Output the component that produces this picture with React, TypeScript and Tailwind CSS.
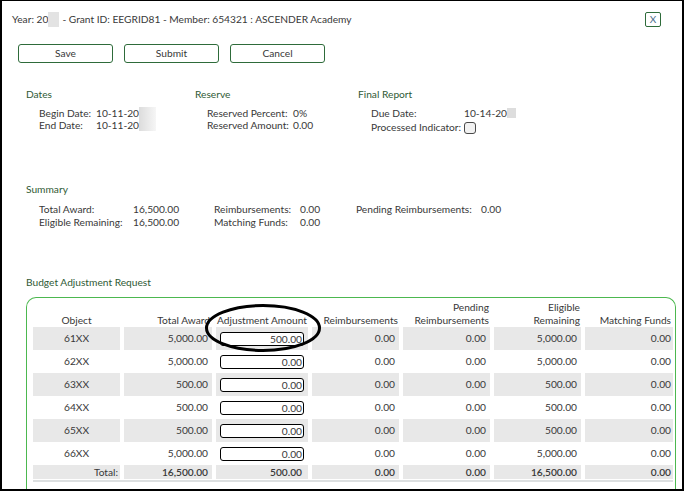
import React from 'react';

const rows = [
  { obj: '61XX', total: '5,000.00', adj: '500.00', reimb: '0.00', pend: '0.00', elig: '5,000.00', match: '0.00' },
  { obj: '62XX', total: '5,000.00', adj: '0.00', reimb: '0.00', pend: '0.00', elig: '5,000.00', match: '0.00' },
  { obj: '63XX', total: '500.00', adj: '0.00', reimb: '0.00', pend: '0.00', elig: '500.00', match: '0.00' },
  { obj: '64XX', total: '500.00', adj: '0.00', reimb: '0.00', pend: '0.00', elig: '500.00', match: '0.00' },
  { obj: '65XX', total: '500.00', adj: '0.00', reimb: '0.00', pend: '0.00', elig: '500.00', match: '0.00' },
  { obj: '66XX', total: '5,000.00', adj: '0.00', reimb: '0.00', pend: '0.00', elig: '5,000.00', match: '0.00' },
];

const grid = 'grid grid-cols-[87px_88px_92px_87px_87px_87px_88px] gap-x-[4px]';

const SectionTitle = ({ children }: { children: React.ReactNode }) => (
  <div className="h-[14px] leading-[14px] text-[#2f5a35]">{children}</div>
);

export default function App() {
  return (
    <div
      className="relative w-[684px] h-[491px] flex flex-col bg-white border-t border-l-2 border-r-2 border-b-2 border-black overflow-hidden text-[10.2px] text-[#383838] whitespace-nowrap"
      style={{ fontFamily: 'Lato, "Open Sans", sans-serif' }}
    >
      {/* title */}
      <div className="mt-[11px] h-[15px] flex items-center justify-between pl-[10px] pr-[21px]">
        <div className="leading-[15px] flex items-center">
          <span>Year: 20</span>
          <span className="inline-block w-[11px] h-[15px] bg-[#e3e3e3] mr-[3px]" />
          <span>- Grant ID: EEGRID81 - Member: 654321 : ASCENDER Academy</span>
        </div>
        <button className="w-[16px] h-[15px] border border-[#2e6b3a] rounded-[2px] text-[10px] leading-[13px] text-[#4a6a8a]">X</button>
      </div>

      {/* actions */}
      <div className="mt-[17px] pl-[16px] flex gap-[11px]">
        {['Save', 'Submit', 'Cancel'].map(b => (
          <button key={b} className="w-[95px] h-[19px] border border-[#2e6b3a] rounded-[3px] leading-[17px] text-[#383838]">
            {b}
          </button>
        ))}
      </div>

      {/* info sections */}
      <div className="mt-[24px] h-[95px] pl-[24px] flex">
        <div className="w-[169px]">
          <SectionTitle>Dates</SectionTitle>
          <div className="mt-[6px] pl-[13px] flex leading-[12px]">
            <div className="w-[57px]">
              <div>Begin Date:</div>
              <div>End Date:</div>
            </div>
            <div>
              <div>10-11-20</div>
              <div>10-11-20</div>
            </div>
            <div className="w-[17px] h-[24px] bg-gradient-to-r from-[#dcdcdc] to-[#f6f6f6]" />
          </div>
        </div>
        <div className="w-[163px]">
          <SectionTitle>Reserve</SectionTitle>
          <div className="mt-[6px] pl-[12px] flex leading-[12px]">
            <div className="w-[86px]">
              <div>Reserved Percent:</div>
              <div>Reserved Amount:</div>
            </div>
            <div>
              <div>0%</div>
              <div>0.00</div>
            </div>
          </div>
        </div>
        <div>
          <SectionTitle>Final Report</SectionTitle>
          <div className="mt-[6px] pl-[13px]">
            <div className="flex leading-[13px]">
              <div className="w-[93px]">Due Date:</div>
              <div>10-14-20</div>
              <div className="w-[9px] h-[10px] mt-[1px] bg-[#dddddd]" />
            </div>
            <div className="flex items-center h-[15px]">
              <div className="w-[93px]">Processed Indicator:</div>
              <div className="w-[12px] h-[12px] rounded-[3px] border border-[#4a4a4a] bg-[#f2f2f2]" />
            </div>
          </div>
        </div>
      </div>

      {/* summary */}
      <div className="h-[93px] pl-[24px]">
        <SectionTitle>Summary</SectionTitle>
        <div className="mt-[7px] pl-[13px] flex leading-[13px]">
          <div className="w-[94px]">
            <div>Total Award:</div>
            <div>Eligible Remaining:</div>
          </div>
          <div className="w-[81px]">
            <div>16,500.00</div>
            <div>16,500.00</div>
          </div>
          <div className="w-[86px]">
            <div>Reimbursements:</div>
            <div>Matching Funds:</div>
          </div>
          <div className="w-[56px]">
            <div>0.00</div>
            <div>0.00</div>
          </div>
          <div className="w-[125px]">Pending Reimbursements:</div>
          <div>0.00</div>
        </div>
      </div>

      {/* budget adjustment */}
      <div className="pl-[24px]">
        <SectionTitle>Budget Adjustment Request</SectionTitle>
      </div>
      <div className="mt-[8px] ml-[24px] w-[650px] flex-1 border border-b-0 border-[#4cb84f] rounded-t-[10px] pl-[6px] pt-[3px]">
        <div className={`${grid} h-[26px] leading-[13px]`}>
          <div className="flex items-end justify-center">Object</div>
          <div className="flex items-end justify-end pr-[2px]">Total Award</div>
          <div className="flex items-end justify-center">Adjustment Amount</div>
          <div className="flex items-end justify-end pr-[1px]">Reimbursements</div>
          <div className="flex items-end justify-end pr-[1px] text-right">Pending<br />Reimbursements</div>
          <div className="flex items-end justify-end pr-[1px] text-right">Eligible<br />Remaining</div>
          <div className="flex items-end justify-end pr-[2px]">Matching Funds</div>
        </div>
        {rows.map((r, i) => {
          const bg = i % 2 === 0 ? 'bg-[#e8e8e8]' : 'bg-white';
          const cell = `${bg} flex items-center justify-end pr-[4px]`;
          return (
            <div key={r.obj} className={`${grid} h-[23px]`}>
              <div className={`${bg} flex items-center justify-center`}>{r.obj}</div>
              <div className={cell}>{r.total}</div>
              <div className={`${bg} flex items-center pl-[4px]`}>
                <div className="w-[84px] h-[14px] border border-black rounded-[3px] bg-white text-right pr-[1px] leading-[12px]">
                  {r.adj}
                </div>
              </div>
              <div className={cell}>{r.reimb}</div>
              <div className={cell}>{r.pend}</div>
              <div className={cell}>{r.elig}</div>
              <div className={`${bg} flex items-center justify-end pr-[2px]`}>{r.match}</div>
            </div>
          );
        })}
        <div className={`${grid} h-[14px] leading-[14px]`}>
          <div className="bg-[#e8e8e8] text-right pr-[2px]">Total:</div>
          <div className="bg-[#e8e8e8] text-right pr-[4px] font-semibold">16,500.00</div>
          <div className="bg-[#e8e8e8] text-right pr-[6px] font-semibold">500.00</div>
          <div className="bg-[#e8e8e8] text-right pr-[4px] font-semibold">0.00</div>
          <div className="bg-[#e8e8e8] text-right pr-[4px] font-semibold">0.00</div>
          <div className="bg-[#e8e8e8] text-right pr-[4px] font-semibold">16,500.00</div>
          <div className="bg-[#e8e8e8] text-right pr-[2px] font-semibold">0.00</div>
        </div>
        <div className="mt-[1px] w-[640px] h-[2px] bg-[#dcdfe0]" />
      </div>

      {/* annotation ellipse */}
      <svg className="absolute left-[202px] top-[302px]" width="118" height="50" viewBox="0 0 118 50">
        <ellipse cx="59" cy="25" rx="56.5" ry="22.5" fill="none" stroke="#000" strokeWidth="3" />
      </svg>
    </div>
  );
}
